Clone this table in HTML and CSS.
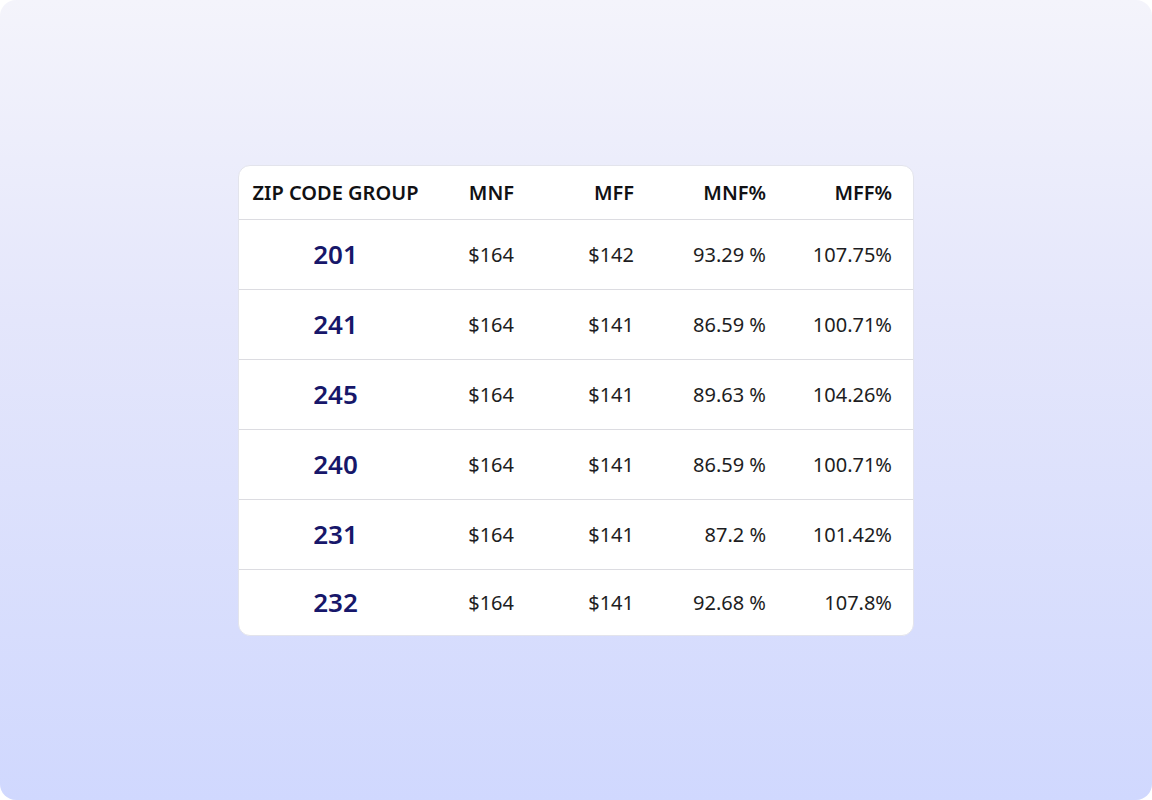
FILE: index.html
```html
<!DOCTYPE html>
<html>
<head>
<meta charset="utf-8">
<link rel="stylesheet" href="styles.css">
</head>
<body>
<div class="frame">
  <div class="card">
    <table class="grid">
      <colgroup>
        <col class="c-zip"><col class="c-mnf"><col class="c-mff"><col class="c-mnfp"><col class="c-mffp">
      </colgroup>
      <thead>
        <tr><th class="zip">ZIP CODE GROUP</th><th>MNF</th><th>MFF</th><th>MNF%</th><th>MFF%</th></tr>
      </thead>
      <tbody>
        <tr><td class="zip">201</td><td>$164</td><td>$142</td><td>93.29 %</td><td>107.75%</td></tr>
        <tr><td class="zip">241</td><td>$164</td><td>$141</td><td>86.59 %</td><td>100.71%</td></tr>
        <tr><td class="zip">245</td><td>$164</td><td>$141</td><td>89.63 %</td><td>104.26%</td></tr>
        <tr><td class="zip">240</td><td>$164</td><td>$141</td><td>86.59 %</td><td>100.71%</td></tr>
        <tr><td class="zip">231</td><td>$164</td><td>$141</td><td>87.2 %</td><td>101.42%</td></tr>
        <tr><td class="zip">232</td><td>$164</td><td>$141</td><td>92.68 %</td><td>107.8%</td></tr>
      </tbody>
    </table>
  </div>
</div>
</body>
</html>
```
FILE: styles.css
```css
html, body {
  margin: 0;
  padding: 0;
  background: #ffffff;
}
.frame {
  width: 1152px;
  height: 800px;
  border-radius: 16px;
  background: linear-gradient(180deg, #f4f4fb 0%, #e4e6fb 40%, #d0d8fe 100%);
  display: flex;
  align-items: center;
  justify-content: center;
  font-family: "Noto Sans", "Open Sans", sans-serif;
}
.card {
  width: 674px;
  background: #ffffff;
  border: 1.5px solid #e3e4ec;
  border-radius: 12px;
  overflow: hidden;
}
.grid {
  width: 100%;
  border-collapse: collapse;
  table-layout: fixed;
}
.c-zip { width: 193px; }
.c-mnf { width: 103px; }
.c-mff { width: 120px; }
.c-mnfp { width: 132px; }
.c-mffp { width: 126px; }
th, td {
  padding: 0 21px 0 0;
  text-align: right;
  white-space: nowrap;
}
th {
  height: 53px;
  font-size: 20px;
  font-weight: 600;
  color: #111114;
  border-bottom: 1px solid #dcdce1;
}
td {
  height: 69px;
  font-size: 20px;
  font-weight: 400;
  color: #1d1d22;
  border-bottom: 1px solid #dcdce1;
}
tbody tr:last-child td {
  border-bottom: none;
  height: 65px;
}
th.zip, td.zip {
  text-align: center;
  padding: 0;
}
td.zip {
  font-size: 26px;
  font-weight: 600;
  color: #17176a;
}
```
